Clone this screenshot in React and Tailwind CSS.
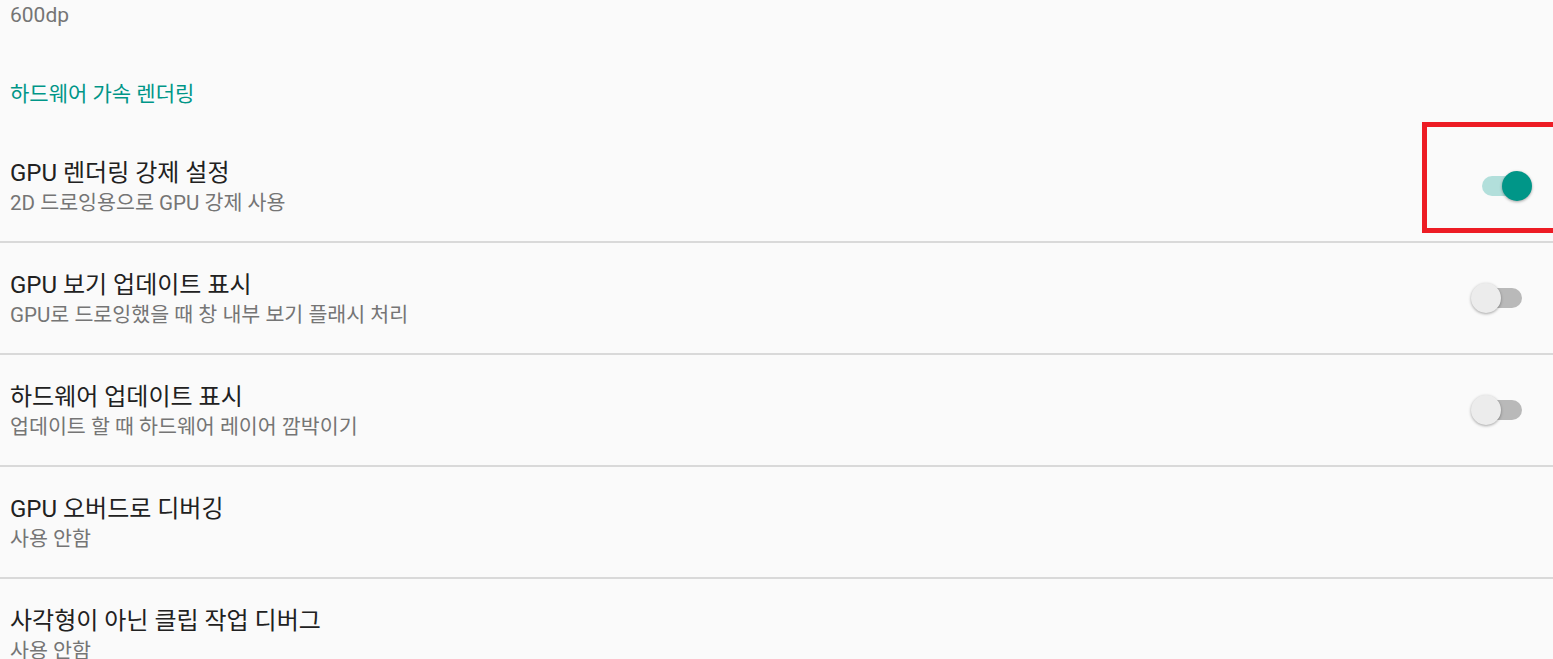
import React from "react";

const font = { fontFamily: 'Roboto, "Noto Sans CJK KR", sans-serif' };

function Switch({ on }) {
  return (
    <div className="relative w-[62px] h-[30px] shrink-0">
      <div
        className={`absolute left-[11px] top-[5px] w-[40px] h-[20px] rounded-full ${
          on ? "bg-[#b2dfdb]" : "bg-[#b9b9b9]"
        }`}
      />
      <div
        className={`absolute top-0 w-[30px] h-[30px] rounded-full shadow-[0_1px_3px_rgba(0,0,0,0.35)] ${
          on ? "left-[31px] bg-[#009688]" : "left-0 bg-[#ececec]"
        }`}
      />
    </div>
  );
}

function Row({ title, sub, toggle, highlight, divider = true }) {
  return (
    <div
      className={`relative flex items-center h-[112px] pl-[10px] pr-[20px] ${
        divider ? "border-b-2 border-[#d9d9d9]" : ""
      }`}
    >
      <div className="flex-1 self-start pt-[26px]">
        <div className="text-[24px] leading-[32px] text-[#212121]">{title}</div>
        <div className="text-[20.6px] leading-[28px] text-[#757575]">{sub}</div>
      </div>
      {toggle !== undefined && <Switch on={toggle} />}
      {highlight && (
        <div className="absolute left-[1422px] top-[-9px] right-0 h-[111px] border-l-[5px] border-t-[5px] border-b-[5px] border-[#ed1c24]" />
      )}
    </div>
  );
}

export default function App() {
  return (
    <div className="w-full h-[659px] overflow-hidden bg-[#fafafa]" style={font}>
      <div className="h-[131px] pl-[10px]">
        <div className="pt-[1px] text-[21px] leading-[28px] text-[#757575]">600dp</div>
        <div className="mt-[51px] text-[21px] leading-[28px] text-[#009688]">하드웨어 가속 렌더링</div>
      </div>
      <Row title="GPU 렌더링 강제 설정" sub="2D 드로잉용으로 GPU 강제 사용" toggle={true} highlight />
      <Row title="GPU 보기 업데이트 표시" sub="GPU로 드로잉했을 때 창 내부 보기 플래시 처리" toggle={false} />
      <Row title="하드웨어 업데이트 표시" sub="업데이트 할 때 하드웨어 레이어 깜박이기" toggle={false} />
      <Row title="GPU 오버드로 디버깅" sub="사용 안함" />
      <Row title="사각형이 아닌 클립 작업 디버그" sub="사용 안함" divider={false} />
    </div>
  );
}
